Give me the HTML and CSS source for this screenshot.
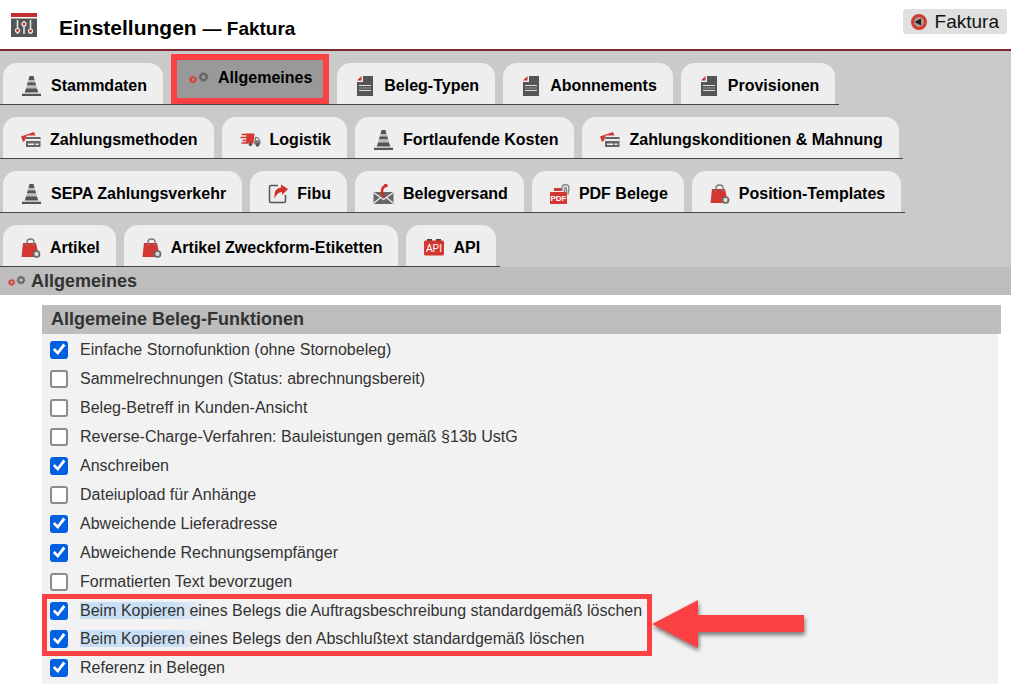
FILE: index.html
```html
<!DOCTYPE html>
<html lang="de">
<head>
    <meta charset="UTF-8">
    <meta name="viewport" content="width=device-width, initial-scale=1.0">
    <title>Einstellungen — Faktura</title>
    <link rel="stylesheet" href="styles.css">
</head>
<body>
    <svg class="sprite" aria-hidden="true">
        <symbol id="cone" viewBox="0 0 20 20">
            <path fill="#555" d="M8 0h4l1 4H7zM6.2 6.2h7.6l.9 3.3H5.3zM4.6 12.2h10.8l1.4 4.3H3.2zM.5 17.800h19V20H.5z"/>
            <path fill="#bbb" d="M7 4h6l.8 2.200H6.200zM5.300 9.500h9.400l.7 2.700H4.600z"/>
        </symbol>
        <symbol id="gears" viewBox="0 0 20 20">
            <circle cx="4" cy="11.500" r="2.300" fill="none" stroke="#d8443e" stroke-width="2"/>
            <circle cx="4" cy="11.500" r="3.400" fill="none" stroke="#d8443e" stroke-width="1" stroke-dasharray="1.500 1"/>
            <circle cx="14.500" cy="9" r="3" fill="none" stroke="#666" stroke-width="2"/>
            <circle cx="14.500" cy="9" r="4.300" fill="none" stroke="#666" stroke-width="1" stroke-dasharray="1.900 1"/>
        </symbol>
        <symbol id="doc" viewBox="0 0 20 20">
            <path fill="#555" d="M8 0h10v20H2V6h6z"/>
            <path fill="#d03030" d="M6.500 0v4.500H2z"/>
            <path stroke="#ddd" stroke-width="1.200" d="M4 9.500h12M4 14.500h12"/>
            <path stroke="#999" d="M4 12h12"/>
        </symbol>
        <symbol id="cards" viewBox="0 0 20 20">
            <path fill="#cf3934" d="M0 6.500L13 2l1.500 3.500H6L4.500 8v2L2 12z"/>
            <path fill="#666" d="M5 7h14.500v10H5z"/>
            <path fill="#eee" d="M5 9h14.500v2H5zM7 13.500h6V15H7zM14.500 13.500h3V15h-3z"/>
        </symbol>
        <symbol id="truck" viewBox="0 0 20 20">
            <path fill="#d43731" d="M6 3.500h8l-1 10H5.500z"/>
            <path stroke="#d43731" stroke-width="1.300" d="M1 4.500h7M0 7.500h7M2 10.500h5M1 13h6"/>
            <path fill="#777" d="M14.500 7h3l2.500 4v3.500h-6.500z"/>
            <path fill="#ddd" d="M15.500 8h1.700l1.300 2.500h-3z"/>
            <circle cx="10" cy="14.500" r="1.800" fill="#555"/>
            <circle cx="17" cy="15" r="1.800" fill="#555"/>
        </symbol>
        <symbol id="share" viewBox="0 0 20 20">
            <path fill="none" stroke="#555" stroke-width="1.500" d="M10 1.500H3Q1.500 1.500 1.500 3v14q0 1.500 1.500 1.500h13q1.500 0 1.500-1.500v-6"/>
            <path fill="#d0312b" d="M13 .5L20 5l-6 6V8q-5 0-7.500 7Q5.500 4 13 3.500z"/>
        </symbol>
        <symbol id="mail" viewBox="0 0 20 20">
            <path fill="#666" d="M0 8h20v12H0z"/>
            <path fill="none" stroke="#eee" stroke-width="1.300" d="M0 8.500l10 7 10-7M0 19.500l7-6M20 19.500l-7-6"/>
            <path fill="none" stroke="#d0312b" stroke-width="2.500" d="M13.500 1.500Q8.500 2.500 8.500 7q0 3 1.500 5"/>
            <path stroke="#d0312b" stroke-width="3.500" d="M11 1.800l3-.8M8.500 12l2.500-1.500"/>
        </symbol>
        <symbol id="pdf" viewBox="0 0 20 20">
            <path fill="#d43731" d="M0 8h17v12H0zM4 4h8v3H4z"/>
            <path fill="none" stroke="#888" stroke-width="1.400" d="M12 7V4q0-3 3-3.500 4 0 4 4l-1 6M14.500 8V4.500q1-2 2 0V9"/>
            <text class="icon-text" x="8.500" y="17" font-size="8">PDF</text>
        </symbol>
        <symbol id="bag" viewBox="0 0 20 20">
            <path fill="none" stroke="#777" stroke-width="1.400" d="M6 7V4q0-3 3.500-3T13 4v3"/>
            <path fill="#d43731" d="M2 5h13l1.500 7-2 7H.5z"/>
            <path fill="#777" d="M5 5.500h2v2H5zM12 5.500h2v2h-2z"/>
            <circle cx="15.500" cy="16" r="3" fill="#ddd" stroke="#666" stroke-width="1.700"/>
        </symbol>
        <symbol id="api" viewBox="0 0 20 20">
            <path fill="#444" d="M3 1h5v2H3zM12 1h5v2h-5z"/>
            <rect x="0" y="2.500" width="20" height="15" rx="1.500" fill="#d43731"/>
            <text class="icon-text thin" x="10" y="13.500" font-size="10">API</text>
        </symbol>
    </svg>

    <header class="page-header">
        <svg class="logo" viewBox="0 0 26 24" aria-hidden="true">
            <path fill="#c2302c" d="M0 0h26v4H0z"/>
            <path fill="#555" d="M0 5.500h26V24H0z"/>
            <path stroke="#eee" stroke-width="1.500" d="M6.500 7v14M13 8v13M19.500 7v14"/>
            <g fill="#c2302c" stroke="#eee" stroke-width="1.200">
                <circle cx="6.500" cy="17.500" r="2"/>
                <circle cx="13" cy="11" r="2"/>
                <circle cx="19.500" cy="18" r="2"/>
            </g>
        </svg>
        <h1>Einstellungen <small>— Faktura</small></h1>
        <a class="back" href="#">
            <svg class="back-icon" viewBox="0 0 16 16" aria-hidden="true">
                <circle cx="8" cy="8" r="6.500" fill="#a99" stroke="#d23c30" stroke-width="3"/>
                <path fill="#222" d="M3.500 8L10 4.500v7z"/>
            </svg>
            Faktura
        </a>
    </header>

    <nav>
        <ul class="tabs">
            <li><a href="#"><svg class="wide"><use href="#cone"/></svg>Stammdaten</a></li>
            <li><a href="#" class="active"><svg><use href="#gears"/></svg>Allgemeines</a></li>
            <li><a href="#"><svg><use href="#doc"/></svg>Beleg-Typen</a></li>
            <li><a href="#"><svg><use href="#doc"/></svg>Abonnements</a></li>
            <li><a href="#"><svg><use href="#doc"/></svg>Provisionen</a></li>
            <li><a href="#"><svg><use href="#cards"/></svg>Zahlungsmethoden</a></li>
            <li><a href="#"><svg class="wide"><use href="#truck"/></svg>Logistik</a></li>
            <li><a href="#"><svg class="wide"><use href="#cone"/></svg>Fortlaufende Kosten</a></li>
            <li><a href="#"><svg><use href="#cards"/></svg>Zahlungskonditionen &amp; Mahnung</a></li>
            <li><a href="#"><svg class="wide"><use href="#cone"/></svg>SEPA Zahlungsverkehr</a></li>
            <li><a href="#"><svg><use href="#share"/></svg>Fibu</a></li>
            <li><a href="#"><svg class="wide"><use href="#mail"/></svg>Belegversand</a></li>
            <li><a href="#"><svg><use href="#pdf"/></svg>PDF Belege</a></li>
            <li><a href="#"><svg><use href="#bag"/></svg>Position-Templates</a></li>
            <li><a href="#"><svg><use href="#bag"/></svg>Artikel</a></li>
            <li><a href="#"><svg><use href="#bag"/></svg>Artikel Zweckform-Etiketten</a></li>
            <li><a href="#"><svg><use href="#api"/></svg>API</a></li>
        </ul>
    </nav>

    <h2 class="section-title"><svg><use href="#gears"/></svg>Allgemeines</h2>

    <form class="panel">
        <h3>Allgemeine Beleg-Funktionen</h3>
        <div class="options">
            <label><input type="checkbox" checked>Einfache Stornofunktion (ohne Stornobeleg)</label>
            <label><input type="checkbox">Sammelrechnungen (Status: abrechnungsbereit)</label>
            <label><input type="checkbox">Beleg-Betreff in Kunden-Ansicht</label>
            <label><input type="checkbox">Reverse-Charge-Verfahren: Bauleistungen gemäß §13b UstG</label>
            <label><input type="checkbox" checked>Anschreiben</label>
            <label><input type="checkbox">Dateiupload für Anhänge</label>
            <label><input type="checkbox" checked>Abweichende Lieferadresse</label>
            <label><input type="checkbox" checked>Abweichende Rechnungsempfänger</label>
            <label><input type="checkbox">Formatierten Text bevorzugen</label>
            <div class="marked">
                <label><input type="checkbox" checked><span><mark>Beim Kopieren ein</mark>es Belegs die Auftragsbeschreibung standardgemäß löschen</span></label>
                <label><input type="checkbox" checked><span><mark>Beim Kopieren ein</mark>es Belegs den Abschlußtext standardgemäß löschen</span></label>
                <svg class="arrow" viewBox="0 0 152 48" aria-hidden="true">
                    <path fill="#fc4144" d="M0 24L46 0v15h106v17H46v16z"/>
                </svg>
            </div>
            <label><input type="checkbox" checked>Referenz in Belegen</label>
        </div>
    </form>
</body>
</html>
```
FILE: styles.css
```css
body {
    margin: 0;
    font-family: "Liberation Sans", Arial, sans-serif;
    font-size: 16px;
    color: #333;
    background-color: #fff;
}

.sprite {
    display: none;
}

.icon-text {
    fill: #fff;
    font-family: "Liberation Sans", Arial, sans-serif;
    font-weight: bold;
    text-anchor: middle;
}

.icon-text.thin {
    font-weight: normal;
}

/* header */
.page-header {
    display: flex;
    align-items: flex-start;
    height: 49px;
    padding: 0 4px 0 11px;
    border-bottom: 2px solid #7b2833;
}

.logo {
    width: 26px;
    height: 24px;
    margin-top: 13px;
}

.page-header h1 {
    flex: 1;
    margin: 16px 0 0 22px;
    font-size: 21px;
    line-height: 24px;
    color: #000;
}

.page-header small {
    font-size: 19px;
}

.back {
    display: flex;
    align-items: center;
    gap: 8px;
    margin-top: 9px;
    padding: 0 8px;
    border-radius: 3px;
    background-color: #dfdfdf;
    color: #111;
    font-size: 19px;
    line-height: 25px;
    text-decoration: none;
}

.back-icon {
    width: 16px;
    height: 16px;
}

/* tabs */
nav {
    background-color: #cacaca;
}

.tabs {
    display: flex;
    flex-wrap: wrap;
    margin: 0 0 0 -1px;
    padding: 0;
    list-style: none;
}

.tabs li {
    display: flex;
    align-items: flex-end;
    height: 53px;
    padding: 0 4px;
    border-bottom: 1px solid #444;
}

.tabs a {
    display: flex;
    align-items: center;
    gap: 9px;
    box-sizing: border-box;
    height: 41px;
    padding: 4px 16px 0 18px;
    border-radius: 14px 14px 0 0;
    background-color: #eee;
    color: #000;
    font-weight: bold;
    text-decoration: none;
}

.tabs svg,
.section-title svg {
    width: 20px;
    height: 20px;
}

.tabs svg.wide {
    width: 21px;
}

.tabs a.active {
    height: 50px;
    padding: 0 11px 2px 12px;
    border: 6px solid #fc4144;
    border-radius: 0;
    background-color: #999;
}

/* content */
.section-title {
    display: flex;
    align-items: center;
    gap: 5px;
    margin: 0;
    padding-left: 8px;
    background-color: #bdbdbd;
    font-size: 18px;
    line-height: 28px;
}

.section-title svg {
    width: 18px;
}

.panel {
    margin: 10px 10px 0 42px;
}

.panel h3 {
    margin: 0;
    padding-left: 9px;
    background-color: #bdbdbd;
    font-size: 18px;
    line-height: 29px;
}

.options {
    margin-right: 3px;
    padding: 1px 0 8px;
    background-color: #f2f2f2;
}

.options label {
    display: flex;
    align-items: center;
    gap: 12px;
    height: 29px;
    padding-left: 8px;
}

.options input {
    appearance: none;
    position: relative;
    width: 18px;
    height: 18px;
    margin: 0;
    border: 2px solid #8c8c90;
    border-radius: 3px;
    background-color: #fff;
}

.options input:checked {
    border-color: #0060df;
    background-color: #0060df;
}

.options input:checked::before {
    content: "";
    position: absolute;
    inset: 0;
    background-color: #fff;
    clip-path: polygon(6% 54%, 20% 40%, 40% 60%, 80% 8%, 96% 22%, 42% 90%);
}

/* the two highlighted options */
.marked {
    position: relative;
    width: fit-content;
    margin-top: 1px;
    padding-right: 10px;
}

.marked label {
    height: 28px;
}

.marked::after {
    content: "";
    position: absolute;
    inset: -3px 0;
    border: 5px solid #fc4144;
    pointer-events: none;
}

.marked mark {
    background: linear-gradient(90deg, #c9dff5 70%, #e6edf4 90%, #f2f2f2);
    color: inherit;
}

.arrow {
    position: absolute;
    top: 3px;
    left: 100%;
    width: 152px;
    height: 48px;
    overflow: visible;
    filter: drop-shadow(1px 3px 2px rgba(0, 0, 0, 0.5));
}
```
